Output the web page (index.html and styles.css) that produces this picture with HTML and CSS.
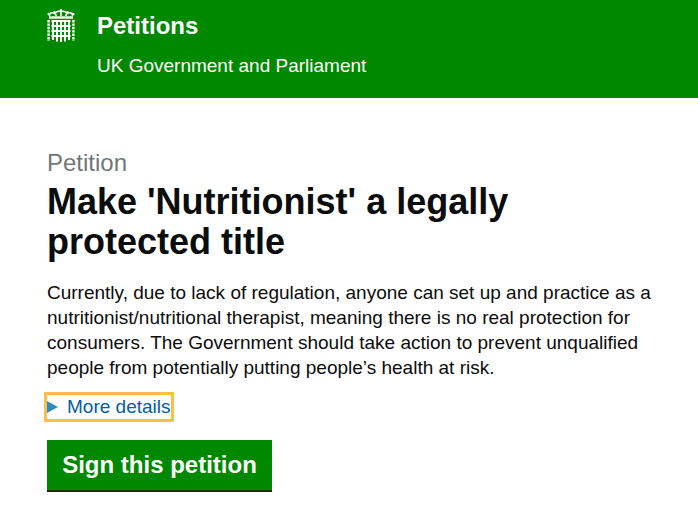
FILE: index.html
```html
<!DOCTYPE html>
<html lang="en">
<head>
    <meta charset="UTF-8">
    <meta name="viewport" content="width=device-width, initial-scale=1.0">
    <title>Petitions</title>
    <link rel="stylesheet" href="styles.css">
</head>
<body>

<header class="site-header">
    <svg class="crest" width="28" height="33" viewBox="0 0 28 33" fill="none" stroke="#fff" aria-hidden="true">
        <!-- crown -->
        <path d="M2 8.5 H26" stroke-width="2.4"/>
        <path d="M2.5 7 C2 4 5 3 8 4.5 L9.5 7 M25.5 7 C26 4 23 3 20 4.5 L18.5 7 M8 4.5 C9 2.5 12 2 14 2.5 C16 2 19 2.5 20 4.5 M14 2.5 V7" stroke-width="1.6"/>
        <circle cx="14" cy="1.2" r="1.2" fill="#fff" stroke="none"/>
        <circle cx="1.5" cy="5" r="1.1" fill="#fff" stroke="none"/>
        <circle cx="26.5" cy="5" r="1.1" fill="#fff" stroke="none"/>
        <circle cx="7.5" cy="3" r="1" fill="#fff" stroke="none"/>
        <circle cx="20.5" cy="3" r="1" fill="#fff" stroke="none"/>
        <!-- portcullis -->
        <path d="M6 11 V31 M10 11 V32.5 M14 11 V33 M18 11 V32.5 M22 11 V31" stroke-width="2"/>
        <path d="M4.5 12 H23.5 M4.5 17 H23.5 M4.5 22 H23.5 M4.5 27 H23.5" stroke-width="2"/>
        <!-- chains -->
        <path d="M1.6 11 V32 M26.4 11 V32" stroke-width="2.4" stroke-dasharray="2.4 1"/>
    </svg>
    <div class="header-text">
        <div class="site-name">Petitions</div>
        <div class="site-sub">UK Government and Parliament</div>
    </div>
</header>

<main class="content">
    <div class="kicker">Petition</div>
    <h1>Make 'Nutritionist' a legally protected title</h1>
    <p class="summary">Currently, due to lack of regulation, anyone can set up and practice as a nutritionist/nutritional therapist, meaning there is no real protection for consumers. The Government should take action to prevent unqualified people from potentially putting people’s health at risk.</p>
    <div class="details-row">
        <span class="details-toggle">
            <span class="arrow"></span>
            <span class="details-link">More details</span>
        </span>
    </div>
    <a class="sign-button" href="#">Sign this petition</a>
</main>

</body>
</html>
```

FILE: styles.css
```css
body {
    margin: 0;
    font-family: "Liberation Sans", Arial, sans-serif;
    background-color: #fff;
    color: #0b0c0c;
}
.site-header {
    display: flex;
    align-items: flex-start;
    gap: 22px;
    height: 98px;
    box-sizing: border-box;
    padding: 9px 47px 0;
    background-color: #008800;
    color: #fff;
}
.crest {
    flex: none;
}
.site-name {
    font-size: 24px;
    font-weight: bold;
    line-height: 34px;
}
.site-sub {
    margin-top: 12px;
    font-size: 19px;
    line-height: 22px;
}
.content {
    padding: 50px 47px 0;
}
.kicker {
    font-size: 24px;
    line-height: 30px;
    color: #6f777b;
}
h1 {
    margin: 4px 0 0;
    font-size: 36px;
    line-height: 40px;
    font-weight: bold;
    width: 560px;
}
.summary {
    margin: 18px 0 0;
    font-size: 19px;
    line-height: 25px;
    width: 610px;
}
.details-row {
    display: flex;
    margin-top: 15px;
}
.details-toggle {
    display: flex;
    align-items: center;
    gap: 9px;
    height: 24px;
    outline: 3px solid #ffbf47;
}
.arrow {
    width: 0;
    height: 0;
    border-style: solid;
    border-width: 6.5px 0 6.5px 11px;
    border-color: transparent transparent transparent #2b8cc4;
}
.details-link {
    font-size: 19px;
    color: #005ea5;
}
.sign-button {
    display: block;
    width: 225px;
    height: 52px;
    margin-top: 21px;
    box-sizing: border-box;
    border-bottom: 2px solid #003300;
    background-color: #008800;
    color: #fff;
    font-size: 24px;
    font-weight: bold;
    line-height: 50px;
    text-align: center;
    text-decoration: none;
}
```
